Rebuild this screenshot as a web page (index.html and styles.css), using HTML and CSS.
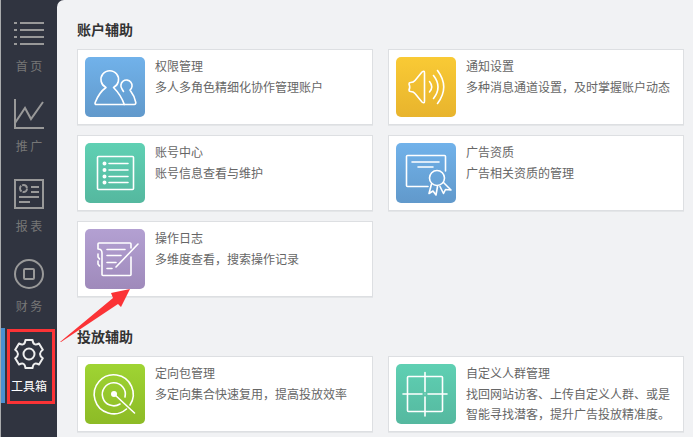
FILE: index.html
```
<!DOCTYPE html>
<html lang="zh-CN">
<head>
    <meta charset="UTF-8">
    <meta name="viewport" content="width=device-width, initial-scale=1.0">
    <title>工具箱</title>
    <link rel="stylesheet" href="styles.css">
</head>
<body>
    <nav class="sidebar">
        <a href="#" class="nav-item">
            <svg class="nav-icon" viewBox="0 0 30 30">
                <path d="M0 4h3M6 4h24M0 11h3M6 11h24M0 18h3M6 18h24M0 25h3M6 25h24"/>
            </svg>
            <span>首 页</span>
        </a>
        <a href="#" class="nav-item">
            <svg class="nav-icon" viewBox="0 0 30 30">
                <path d="M1 0v29h29M1 24L11 9l6 11L29 3"/>
            </svg>
            <span>推 广</span>
        </a>
        <a href="#" class="nav-item">
            <svg class="nav-icon" viewBox="0 0 30 30">
                <path d="M1 1h28v28H1zM17 8h8M17 13h8M5 18h20M5 23h11"/>
                <circle cx="9.500" cy="9.500" r="3.500" stroke-dasharray="6.300 1"/>
            </svg>
            <span>报 表</span>
        </a>
        <a href="#" class="nav-item">
            <svg class="nav-icon" viewBox="0 0 30 30">
                <circle cx="15" cy="15" r="14"/>
                <rect x="10" y="10" width="10" height="10" rx="1"/>
            </svg>
            <span>财 务</span>
        </a>
        <a href="#" class="nav-item active">
            <svg class="nav-icon" viewBox="0 0 30 30">
                <path stroke-linejoin="round" d="M11.500 1h7q.5 3.500 2 4.200 1.500.8 4.500-.7l3.800 6.300q-2.800 2-2.800 4.200t2.800 4.200L25 25.500q-3-1.500-4.500-.7-1.500.7-2 4.200h-7q-.5-3.500-2-4.200-1.500-.8-4.500.7l-3.800-6.300Q4 17.200 4 15t-2.800-4.200L5 4.500q3 1.500 4.500.7 1.500-.7 2-4.200z"/>
                <circle cx="15" cy="15" r="5.500"/>
            </svg>
            <span>工具箱</span>
        </a>
    </nav>

    <main class="content">
        <section class="section">
            <h2>账户辅助</h2>
            <div class="cards">
                <a href="#" class="card">
                    <svg class="card-icon blue" viewBox="0 0 60 60">
                        <path d="M21 30.500a8.800 8.800 0 1 1 7.500 0C33 35 37 41 39.300 47.500H11.500q-2 0-1.300-2C12.500 39.500 16 34 21 30.500z"/>
                        <path d="M38.500 34.500l-1.500-2.500a5.600 5.600 0 1 1 8 1C48 37 50 41 50.800 45.500q0 2-1.500 2H39"/>
                    </svg>
                    <div class="card-text">
                        <h3>权限管理</h3>
                        <p>多人多角色精细化协作管理账户</p>
                    </div>
                </a>
                <a href="#" class="card">
                    <svg class="card-icon yellow" viewBox="0 0 60 60">
                        <path d="M14.500 25.500q3 0 4.500-2l7-8.500q2.500-2 2.500 1v28q0 3-2.500 1l-7-8.500q-1.500-2-4.500-2-1.500 0-1.500-1.500 1.500-2.500 0-6 0-1.500 1.500-1.500zM33.500 24.500q4.500 5.500 0 10.500M37.500 18.500q9 11.500 0 23M41.500 13.500q12.500 16.500 0 33"/>
                    </svg>
                    <div class="card-text">
                        <h3>通知设置</h3>
                        <p>多种消息通道设置，及时掌握账户动态</p>
                    </div>
                </a>
                <a href="#" class="card">
                    <svg class="card-icon green" viewBox="0 0 60 60">
                        <rect x="12.500" y="13.500" width="36" height="33" rx="1"/>
                        <path d="M24 20.500h19M24 27h19M24 33.500h19M24 39.500h19"/>
                        <path class="dots" d="M19.500 20.500h0M19.500 27h0M19.500 33.500h0M19.500 39.500h0"/>
                    </svg>
                    <div class="card-text">
                        <h3>账号中心</h3>
                        <p>账号信息查看与维护</p>
                    </div>
                </a>
                <a href="#" class="card">
                    <svg class="card-icon blue" viewBox="0 0 60 60">
                        <path d="M32 43.500H11.500q-1 0-1-1v-29q0-1 1-1h37q1 0 1 1V28M16 19h27M22 24h15"/>
                        <circle cx="41" cy="35" r="7.500"/>
                        <path d="M35.500 41L33 50.500l4-2.500 3 4 1.500-8.500M44 43.500l3.500 7 2-4 5.500.5-7.500-7.500"/>
                    </svg>
                    <div class="card-text">
                        <h3>广告资质</h3>
                        <p>广告相关资质的管理</p>
                    </div>
                </a>
                <a href="#" class="card">
                    <svg class="card-icon purple" viewBox="0 0 60 60">
                        <path d="M46 19v-4q0-1-1-1H14q-1 0-1 1v5q4 0 4 4v21.500q0 1 1 1h27q1 0 1-1V28M13 25v3l1.500 2M13 32v3l1.500 2M22 20.500h18M22 26.500h14M22 33.500h9M22 39.500h5"/>
                        <path d="M53 15L31 38"/>
                    </svg>
                    <div class="card-text">
                        <h3>操作日志</h3>
                        <p>多维度查看，搜索操作记录</p>
                    </div>
                </a>
            </div>
        </section>

        <section class="section">
            <h2>投放辅助</h2>
            <div class="cards">
                <a href="#" class="card">
                    <svg class="card-icon lime" viewBox="0 0 60 60">
                        <path d="M41.500 45A19.500 19.500 0 1 1 45 41M35 40A11.500 11.500 0 1 1 40 33M29 30l20.500 19"/>
                        <path class="center" d="M29 30h0"/>
                    </svg>
                    <div class="card-text">
                        <h3>定向包管理</h3>
                        <p>多定向集合快速复用，提高投放效率</p>
                    </div>
                </a>
                <a href="#" class="card">
                    <svg class="card-icon green" viewBox="0 0 60 60">
                        <rect x="11.500" y="12.500" width="35" height="35" rx="1"/>
                        <path d="M29 8.500v19M29 33v19M7 30h19M32 30h19"/>
                        <path class="faint" d="M29 30h0"/>
                    </svg>
                    <div class="card-text">
                        <h3>自定义人群管理</h3>
                        <p>找回网站访客、上传自定义人群、或是智能寻找潜客，提升广告投放精准度。</p>
                    </div>
                </a>
            </div>
        </section>
    </main>

    <!-- highlight on the toolbox entry -->
    <div class="mark-box"></div>
    <svg class="mark-arrow" viewBox="0 0 70 54">
        <path d="M0 53L53 9l-2-5L70 0l-9 18-3-3L1 53z"/>
    </svg>
</body>
</html>
```

FILE: styles.css
```
* {
    box-sizing: border-box;
}
body {
    margin: 0;
    display: flex;
    min-height: 100vh;
    position: relative;
    overflow: hidden;
    border-left: 1px solid #a9abad;
    background-color: #303440;
    font-family: "Noto Sans CJK SC", "Microsoft YaHei", sans-serif;
    font-size: 12px;
    color: #666;
}
a {
    color: inherit;
    text-decoration: none;
}
h2, h3, p {
    margin: 0;
}
svg {
    flex: none;
    fill: none;
}
.sidebar {
    flex: none;
    width: 56px;
    padding-top: 8px;
}
.nav-item {
    display: flex;
    flex-direction: column;
    align-items: center;
    gap: 7px;
    margin-bottom: 5px;
    padding: 11px 0 7px;
    line-height: 20px;
    color: #777;
}
.nav-icon {
    width: 30px;
    height: 30px;
    stroke: #999;
    stroke-width: 2;
}
.nav-item.active {
    color: #fff;
    box-shadow: inset 4px 0 #4a90d2;
}
.active .nav-icon {
    stroke: #eee;
}
.content {
    flex: 1;
    min-width: 0;
    padding: 19px 9px 5px 20px;
    border-top-left-radius: 7px;
    background-color: #f1f2f4;
}
.section {
    margin-bottom: 29px;
}
.section:last-child {
    margin-bottom: 0;
}
.section h2 {
    margin-bottom: 10px;
    font-size: 14px;
    line-height: 20px;
    font-weight: bold;
    color: #333;
}
.cards {
    display: grid;
    grid-template-columns: 1fr 1fr;
    gap: 10px 15px;
}
.card {
    display: flex;
    gap: 10px;
    padding: 7px;
    border: 1px solid #dddfe2;
    background-color: #fff;
    box-shadow: 0 1px #e4e6e8;
}
.card-icon {
    width: 60px;
    height: 60px;
    border-radius: 5px;
    stroke: #fff;
    stroke-width: 1.6;
    stroke-linecap: round;
    stroke-linejoin: round;
}
.card-icon .dots {
    stroke-width: 4;
}
.card-icon .center {
    stroke-width: 6;
}
.card-icon .faint {
    stroke-opacity: 0.4;
}
.blue {
    background: linear-gradient(#71b2ea, #6199cb);
}
.yellow {
    background: linear-gradient(#f9ca35, #e8b42d);
}
.green {
    background: linear-gradient(#5fd0b3, #55b89f);
}
.purple {
    background: linear-gradient(#b3a0d2, #9f8abb);
}
.lime {
    background: linear-gradient(#9fd433, #8dbb26);
}
.card-text h3 {
    margin-bottom: 2px;
    font-size: 12px;
    line-height: 18px;
    font-weight: normal;
}
.card-text p {
    line-height: 20px;
}
.mark-box {
    position: absolute;
    left: 6px;
    top: 329px;
    width: 48px;
    height: 75px;
    border: 3px solid #fb3336;
    pointer-events: none;
}
.mark-arrow {
    position: absolute;
    left: 59px;
    top: 289px;
    width: 70px;
    height: 54px;
    fill: #fb3336;
    pointer-events: none;
}
```
